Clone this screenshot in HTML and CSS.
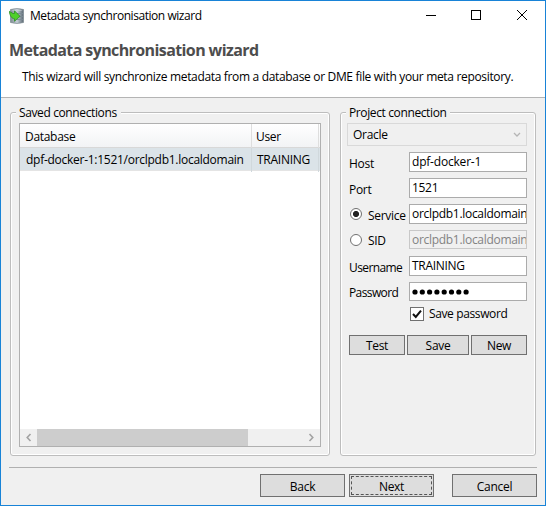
FILE: index.html
```html
<!DOCTYPE html>
<html lang="en">
<head>
<meta charset="utf-8">
<title>Metadata synchronisation wizard</title>
<link rel="stylesheet" href="styles.css">
</head>
<body>
<div class="window">
  <header class="head">
    <div class="titlebar">
      <svg class="app-icon" width="16" height="16" viewBox="0 0 16 16">
        <defs><linearGradient id="metal"><stop offset="0" stop-color="#7d8b92"/><stop offset=".5" stop-color="#c5ced6"/><stop offset="1" stop-color="#5a6872"/></linearGradient></defs>
        <path d="M1.5 1.5Q8-.5 14.5 1.5V14.5Q8 16.5 1.5 14.5Z" fill="url(#metal)" stroke="#7d8991" stroke-width=".7"/>
        <path d="M2 2.3Q8 .8 14 2.3Q8 3.8 2 2.3Z" fill="#c6ced6"/>
        <path d="M8 5.5H14M9 8.5H14M8 11.5H14" stroke="#7b8993" stroke-width=".9"/>
        <path d="M.3 3.3L4 5.5H5.5V2.8L11 8.3L5.5 13.3V10.8C3 10.8 .8 8 .3 3.3Z" fill="#4fd02a" stroke="#23851a" stroke-width=".7"/>
      </svg>
      <span class="caption">Metadata synchronisation wizard</span>
      <svg class="controls" width="103" height="12" viewBox="0 0 103 12" fill="none" stroke="#000" stroke-width="1">
        <path d="M0 5.5H10"/><rect x="45.5" y=".5" width="9" height="9"/><path d="M91 0L101 10M101 0L91 10"/>
      </svg>
    </div>
    <h1>Metadata synchronisation wizard</h1>
    <p class="intro">This wizard will synchronize metadata from a database or DME file with your meta repository.</p>
  </header>
  <main class="body">
    <section class="group saved">
      <h2 class="legend">Saved connections</h2>
      <div class="table">
        <div class="row thead"><span class="cell">Database</span><span class="cell user">User</span><span class="cell"></span></div>
        <div class="row selected"><span class="cell">dpf-docker-1:1521/orclpdb1.localdomain</span><span class="cell user">TRAINING</span><span class="cell"></span></div>
        <div class="blank"></div>
        <div class="scrollbar">
          <svg width="17" height="17" viewBox="0 0 17 17"><path d="M10.5 5L7.2 8.5L10.5 12" fill="none" stroke="#a3a3a3" stroke-width="1.6"/></svg>
          <div class="thumb"></div>
          <svg class="right" width="17" height="17" viewBox="0 0 17 17"><path d="M6.5 5L9.8 8.5L6.5 12" fill="none" stroke="#a3a3a3" stroke-width="1.6"/></svg>
        </div>
      </div>
    </section>
    <section class="group project">
      <h2 class="legend">Project connection</h2>
      <div class="select"><span>Oracle</span><svg width="8" height="6" viewBox="0 0 8 6"><path d="M1 1L4 4L7 1" fill="none" stroke="#b5b5b5" stroke-width="1.3"/></svg></div>
      <div class="form">
        <div class="field"><span class="label">Host</span><div class="input host">dpf-docker-1</div></div>
        <div class="field"><span class="label">Port</span><div class="input">1521</div></div>
        <div class="field"><span class="label radio"><i class="dot on"></i><span>Service</span></span><div class="input">orclpdb1.localdomain</div></div>
        <div class="field"><span class="label radio sid"><i class="dot"></i><span>SID</span></span><div class="input disabled">orclpdb1.localdomain</div></div>
        <div class="field"><span class="label long">Username</span><div class="input">TRAINING</div></div>
        <div class="field"><span class="label long password-label">Password</span><div class="input password"><svg width="58" height="6" viewBox="0 0 58 6"><circle cx="3" cy="3" r="2.6"/><circle cx="10.3" cy="3" r="2.6"/><circle cx="17.6" cy="3" r="2.6"/><circle cx="24.9" cy="3" r="2.6"/><circle cx="32.2" cy="3" r="2.6"/><circle cx="39.5" cy="3" r="2.6"/><circle cx="46.8" cy="3" r="2.6"/><circle cx="54.1" cy="3" r="2.6"/></svg></div></div>
      </div>
      <div class="check"><svg width="14" height="14" viewBox="0 0 14 14"><rect x=".5" y=".5" width="13" height="13" fill="#fff" stroke="#707070"/><path d="M3 7L5.8 10L11 3.7" fill="none" stroke="#111" stroke-width="2"/></svg><span>Save password</span></div>
      <div class="actions"><div class="btn">Test</div><div class="btn">Save</div><div class="btn">New</div></div>
    </section>
  </main>
  <footer class="foot"><div class="btn">Back</div><div class="btn next">Next</div><div class="btn">Cancel</div></footer>
</div>
</body>
</html>
```

FILE: styles.css
```css
* { box-sizing: border-box; }
body { margin: 0; }
.window {
  width: 546px; height: 506px; border: 1px solid #1883d7; background: #f0f0f0;
  display: flex; flex-direction: column;
  font: 12px/16px "Open Sans", "Noto Sans", sans-serif; letter-spacing: -0.3px; color: #000; white-space: nowrap;
}
.head { height: 97px; background: #fff; border-bottom: 1px solid #b4b4b4; }
.titlebar { height: 29px; display: flex; align-items: center; padding-left: 8px; }
.app-icon { margin-right: 5px; }
.caption { letter-spacing: -0.45px; }
.controls { margin-left: auto; margin-right: 16px; }
h1 { margin: 9px 0 0 8px; font-size: 16px; line-height: 22px; font-weight: 700; color: #4d4d4d; letter-spacing: -0.6px; }
.intro { margin: 8px 0 0 21px; letter-spacing: -0.33px; }
.body { display: grid; grid-template-columns: 320px 196px; gap: 10px; padding: 14px 0 0 9px; height: 358px; }
.group { height: 344px; border: 1px solid #bdbdbd; border-radius: 3px; box-shadow: inset 0 0 0 1px #fff; }
.legend { margin: -8px 0 0 5px; padding: 0 4px 0 3px; height: 16px; width: max-content; background: #f0f0f0; font-size: 12px; font-weight: 400; letter-spacing: -0.38px; }
.table { margin: 2px 0 0 8px; width: 302px; height: 324px; border: 1px solid #b0b0b0; background: #fff; display: flex; flex-direction: column; }
.row { display: grid; grid-template-columns: 232px 67px 1fr; }
.cell { border-right: 1px solid #dedede; padding-left: 6px; }
.cell:last-child { border-right: 0; }
.thead { height: 24px; line-height: 25px; background: linear-gradient(#fff, #f2f3f5); border-bottom: 1px solid #d8d8d8; }
.thead .cell { padding-left: 5px; }
.thead .user { padding-left: 4px; }
.selected { height: 23px; line-height: 24px; background: #dbe3e8; border-bottom: 1px solid #e4e4e4; letter-spacing: -0.27px; }
.selected .cell { border-color: #d0d8dc; }
.selected .user { padding-left: 5px; }
.blank { flex: 1; }
.scrollbar { height: 17px; background: #f0f0f0; display: flex; }
.thumb { width: 211px; background: #cdcdcd; }
.right { margin-left: auto; }
.select { margin: 2px 0 0 6px; width: 180px; height: 23px; border: 1px solid #d9d9d9; padding: 0 5px; display: flex; align-items: center; justify-content: space-between; }
.form { display: grid; gap: 8px; margin: 6px 0 0 8px; }
.field { display: grid; grid-template-columns: 60px 118px; height: 18px; }
.label { padding-top: 4px; }
.long { letter-spacing: -0.6px; }
.password-label { padding-top: 3px; }
.radio { display: flex; gap: 6px; padding-left: 1px; padding-top: 3px; }
.radio span { padding-top: 1px; }
.sid span { padding-top: 0; }
.dot { width: 12px; height: 12px; margin-top: 1px; border: 1px solid #707070; border-radius: 50%; background: #fff; }
.on { background: radial-gradient(circle, #222 0 2.7px, #fff 3.4px); }
.input { border: 1px solid #ababab; background: #fff; padding-left: 2px; overflow: hidden; line-height: 17px; }
.host { letter-spacing: -0.2px; }
.disabled { border-color: #c8c8c8; background: #f0f0f0; color: #838383; }
.password { display: flex; align-items: center; padding-top: 1px; }
.check { display: flex; align-items: center; gap: 5px; margin: 7px 0 0 69px; height: 14px; letter-spacing: -0.38px; }
.actions { display: grid; grid-template-columns: 56px 62px 56px; gap: 2px; margin: 14px 0 0 8px; height: 20px; }
.btn { border: 1px solid #707070; background: #ddd; display: flex; align-items: center; justify-content: center; padding-top: 2px; }
.foot { margin: 11px 8px 0 8px; border-top: 1px solid #b0b0b0; padding-top: 6px; display: flex; justify-content: flex-end; }
.foot .btn { width: 85px; height: 23px; }
.foot .next { margin: 0 18px 0 4px; outline: 1px dashed #555; outline-offset: -3px; }
```
